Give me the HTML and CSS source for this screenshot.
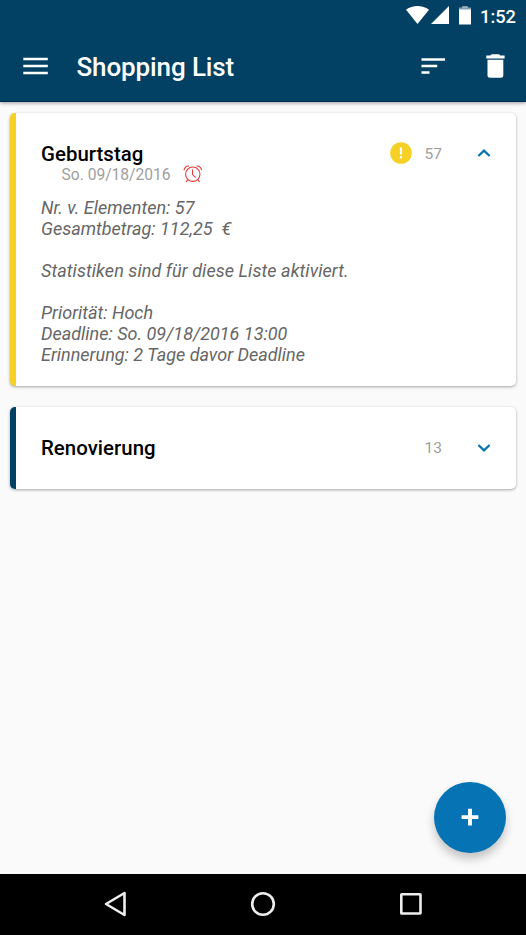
FILE: index.html
```html
<!DOCTYPE html>
<html lang="de">
<head>
<meta charset="utf-8">
<title>Shopping List</title>
<link rel="stylesheet" href="styles.css">
</head>
<body>
<div class="screen">
  <header class="top">
    <div class="status">
      <svg class="status-icons" width="68" height="32" viewBox="0 0 68 32" fill="#fff">
        <path d="M0 9.800C6.700 4.800 16.300 4.800 23 9.800L11.500 24z"/>
        <path d="M25 24L43 6v18z"/>
        <path d="M56.200 6h5.600v2h-5.600z" opacity=".5"/>
        <path d="M53 7.500h12V10H53z" opacity=".5"/>
        <path d="M53 9.500h12v15H53z"/>
      </svg>
      <span class="clock">1:52</span>
    </div>
    <div class="toolbar">
      <svg class="menu" width="25" height="18" viewBox="0 0 25 18" fill="#fff"><path d="M.3.700h24.500v2.600H.3zM.3 7.700h24.500v2.600H.3zM.3 14.700h24.500v2.600H.3z"/></svg>
      <h1>Shopping List</h1>
      <svg class="sort" width="24" height="16" viewBox="0 0 24 16" fill="#fff"><path d="M.5.200h23.500v2.600H.5zM.5 6.700h15.700v2.600H.5zM.5 13.200h8v2.600h-8z"/></svg>
      <svg class="trash" width="19" height="24" viewBox="0 0 19 24" fill="#fff"><path d="M5.600.300h7.500l1.200 1.300h4.300v2.800H.3V1.600h4zM1.500 5.700h15.800v15.500a2.500 2.500 0 0 1-2.500 2.500H4a2.500 2.500 0 0 1-2.500-2.500z"/></svg>
    </div>
  </header>

  <main class="content">
    <section class="card card-high">
      <div class="row">
        <h2>Geburtstag</h2>
        <svg class="alert" width="22" height="22" viewBox="0 0 22 22"><circle cx="11" cy="11" r="10.800" fill="#f7d026"/><path d="M9.900 5.500h2.200v7H9.900zM9.900 14h2.200v2.400H9.900z" fill="#fff"/></svg>
        <span class="count">57</span>
        <svg class="chevron" width="14" height="8" viewBox="0 0 14 8" fill="none" stroke="#0673b5" stroke-width="2.200"><path d="M1.400 7L7 1.600 12.600 7"/></svg>
      </div>
      <div class="deadline">
        <span>So. 09/18/2016</span>
        <svg width="20" height="18" viewBox="0 0 20 18" fill="none" stroke="#e5383b" stroke-width="1.100" stroke-linecap="round"><circle cx="9.800" cy="9.200" r="7.200"/><path d="M9.600 4.800v4.800l2.700 2.600M4.800 14.700l-1.500 1.900M14.800 14.700l1.500 1.900M1.100 4.800C1.500 2.800 3.300 1.100 5.600 1M18.500 4.800C18.100 2.800 16.300 1.100 14 1"/></svg>
      </div>
      <div class="details">
        <p>Nr. v. Elementen: 57</p>
        <p>Gesamtbetrag: 112,25&nbsp; €</p>
        <p class="gap statistics">Statistiken sind für diese Liste aktiviert.</p>
        <p class="gap">Priorität: Hoch</p>
        <p>Deadline: So. 09/18/2016 13:00</p>
        <p>Erinnerung: 2 Tage davor Deadline</p>
      </div>
    </section>

    <section class="card card-normal">
      <div class="row">
        <h2>Renovierung</h2>
        <span class="count">13</span>
        <svg class="chevron" width="14" height="8" viewBox="0 0 14 8" fill="none" stroke="#0673b5" stroke-width="2.200"><path d="M1.400 1L7 6.400 12.600 1"/></svg>
      </div>
    </section>
  </main>

  <button class="fab" aria-label="Neue Liste">
    <svg width="18" height="18" viewBox="0 0 18 18" fill="none" stroke="#fff" stroke-width="3.900"><path d="M9 .7v16.800M.6 9.100h16.800"/></svg>
  </button>

  <nav class="navbar">
    <svg class="nav-back" width="23" height="26" viewBox="0 0 23 26"><path d="M20.500 2v22L2 13z"/></svg>
    <svg class="nav-home" width="26" height="26" viewBox="0 0 26 26"><circle cx="13" cy="13" r="10.800"/></svg>
    <svg class="nav-recent" width="24" height="24" viewBox="0 0 24 24"><rect x="2.300" y="2.300" width="19.200" height="19.200" rx=".5"/></svg>
  </nav>
</div>
</body>
</html>
```
FILE: styles.css
```css
* {
  box-sizing: border-box;
}

body {
  margin: 0;
  font-family: Roboto, sans-serif;
}

h1, h2, p {
  margin: 0;
}

svg {
  display: block;
  flex: none;
}

.screen {
  position: relative;
  display: flex;
  flex-direction: column;
  width: 526px;
  height: 935px;
  overflow: hidden;
  background: #fafafa;
}

.top {
  height: 102px;
  background: #024164;
  border-bottom: 1px solid #012a55;
  box-shadow: 0 1px 4px rgba(0, 0, 0, .4);
}

.status {
  display: flex;
  height: 32px;
  padding-left: 406px;
  color: #fff;
}

.clock {
  margin-left: 6px;
  font-size: 18.3px;
  font-weight: 500;
  line-height: 33px;
  white-space: nowrap;
}

.toolbar {
  display: flex;
  align-items: center;
  height: 68px;
  padding: 0 21.5px 0 23px;
}

.toolbar h1 {
  flex: 1;
  margin-left: 28.5px;
  padding-top: 2px;
  color: #fff;
  font-size: 26px;
  font-weight: 500;
  letter-spacing: -.12px;
  line-height: 30px;
}

.trash {
  margin-left: 41px;
}

.content {
  display: flex;
  flex: 1;
  flex-direction: column;
  gap: 21px;
  padding: 10.5px 10px 0;
}

.card {
  padding-left: 25px;
  background: #fff;
  border-left: 6px solid;
  border-radius: 5px;
  box-shadow: 0 1px 3px rgba(0, 0, 0, .35);
}

.card-high {
  height: 273px;
  border-left-color: #f7d026;
}

.card-normal {
  height: 82px;
  border-left-color: #024164;
}

.row {
  display: flex;
  align-items: center;
  height: 82px;
  padding-right: 25px;
}

.card-normal .row {
  height: 83px;
}

.row h2 {
  flex: 1;
  color: #000;
  font-size: 20.4px;
  font-weight: 500;
  letter-spacing: .04px;
  line-height: 24px;
}

.count {
  margin-left: 13px;
  color: #9e9e9e;
  font-size: 15.5px;
}

.chevron {
  margin-left: 35px;
}

.card-high .alert,
.card-high .chevron {
  margin-bottom: 1px;
}

.deadline {
  display: flex;
  align-items: center;
  height: 20px;
  margin-top: -30px;
  padding-left: 20.5px;
  color: #9e9e9e;
  font-size: 15.6px;
}

.deadline svg {
  margin: 0 0 2px 12.5px;
}

.details {
  margin-top: 12px;
  color: #666;
  font-size: 18px;
  font-style: italic;
  line-height: 21px;
}

.details p {
  white-space: nowrap;
}

.details .gap {
  margin-top: 21px;
}

.details .statistics {
  letter-spacing: .07px;
}

.fab {
  position: absolute;
  top: 781.5px;
  left: 434px;
  display: grid;
  place-items: center;
  width: 71.5px;
  height: 71.5px;
  padding: 0;
  background: #0673b5;
  border: 0;
  border-radius: 50%;
  box-shadow: 0 6px 10px rgba(0, 0, 0, .22);
}

.navbar {
  display: flex;
  align-items: center;
  height: 61px;
  padding: 0 0 1px 104px;
  background: #000;
}

.navbar svg {
  fill: none;
  stroke: #eee;
  stroke-width: 2.600;
  stroke-linejoin: round;
}

.nav-home {
  margin-left: 123px;
}

.nav-recent {
  margin-left: 123px;
}
```
